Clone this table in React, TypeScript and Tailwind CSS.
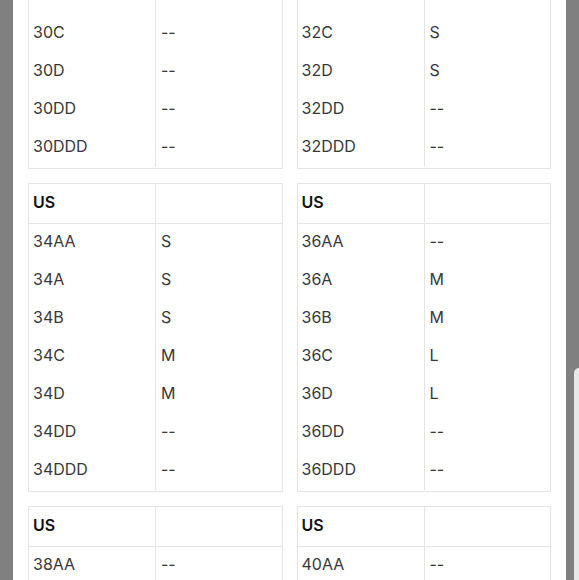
import React from "react";

type Row = [string, string];

const tables: Row[][] = [
  [["30AA", "--"], ["30A", "--"], ["30B", "--"], ["30C", "--"], ["30D", "--"], ["30DD", "--"], ["30DDD", "--"]],
  [["32AA", "--"], ["32A", "--"], ["32B", "--"], ["32C", "S"], ["32D", "S"], ["32DD", "--"], ["32DDD", "--"]],
  [["34AA", "S"], ["34A", "S"], ["34B", "S"], ["34C", "M"], ["34D", "M"], ["34DD", "--"], ["34DDD", "--"]],
  [["36AA", "--"], ["36A", "M"], ["36B", "M"], ["36C", "L"], ["36D", "L"], ["36DD", "--"], ["36DDD", "--"]],
  [["38AA", "--"], ["38A", "M"], ["38B", "L"], ["38C", "L"], ["38D", "--"], ["38DD", "--"], ["38DDD", "--"]],
  [["40AA", "--"], ["40A", "L"], ["40B", "L"], ["40C", "--"], ["40D", "--"], ["40DD", "--"], ["40DDD", "--"]],
];

function SizeTable({ rows }: { rows: Row[] }) {
  return (
    <div className="border border-[#e4e4e4] bg-white pb-[1px]">
      <div className="grid grid-cols-[127px_1fr] h-[40px] border-b border-[#e4e4e4]">
        <div className="flex items-center pb-[4px] px-[4px] border-r border-[#e4e4e4] text-[16px] font-semibold text-[#111]">
          US
        </div>
        <div />
      </div>
      {rows.map(([size, fit], i) => (
        <div key={i} className="grid grid-cols-[127px_1fr] h-[38px]">
          <div className="flex items-center pb-[5px] px-[4px] border-r border-[#e4e4e4] text-[16px] text-[#383838]">
            {size}
          </div>
          <div className="flex items-center pb-[5px] px-[5px] text-[16px] text-[#383838]">
            {fit}
          </div>
        </div>
      ))}
    </div>
  );
}

export default function App() {
  return (
    <div className="relative h-[580px] overflow-hidden bg-[#808080] px-[13px] font-['Inter','Liberation_Sans',sans-serif]">
      <div className="h-full overflow-hidden bg-white px-[15px]">
        <div className="-mt-[140px] grid grid-cols-2 gap-x-[14px] gap-y-[14px]">
          {tables.map((rows, i) => (
            <SizeTable key={i} rows={rows} />
          ))}
        </div>
      </div>
      <div className="absolute right-0 top-[368px] h-[212px] w-[5px] rounded-tl-[6px] bg-[#e8e8e8]" />
    </div>
  );
}
